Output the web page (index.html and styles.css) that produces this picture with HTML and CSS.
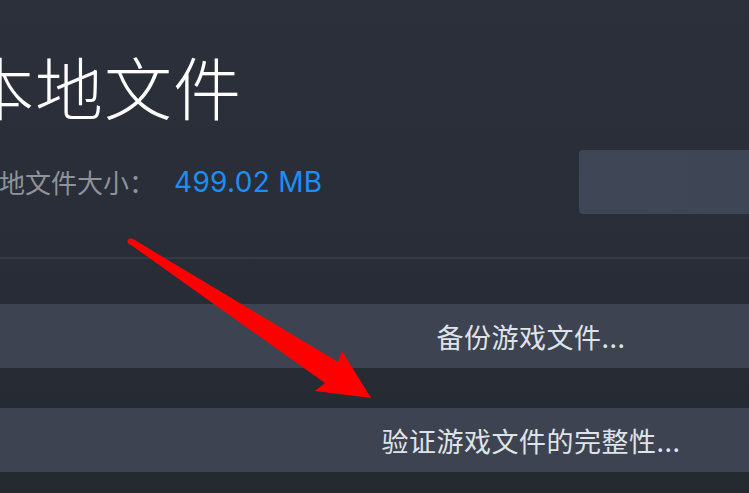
FILE: index.html
```html
<!DOCTYPE html>
<html lang="zh-CN">
<head>
    <meta charset="UTF-8">
    <meta name="viewport" content="width=device-width, initial-scale=1.0">
    <title>本地文件</title>
    <link rel="stylesheet" href="styles.css">
</head>
<body>
    <div class="page">
        <div class="content">
            <h1 class="title">本地文件</h1>
            <div class="sizeRow">
                <span class="sizeLabel">本地文件大小：</span>
                <span class="sizeValue">499.02 MB</span>
                <div class="browseBtn"></div>
            </div>
            <div class="divider"></div>
            <div class="actions">
                <button class="actionBtn" type="button">备份游戏文件...</button>
                <button class="actionBtn" type="button">验证游戏文件的完整性...</button>
            </div>
        </div>
        <!-- red hint arrow drawn over the page -->
        <svg class="arrow" width="749" height="493" viewBox="0 0 749 493">
            <path d="M128 240 Q130 237 133 239 L338 362 L342 351 L371 398 L315 391 L325 383 L131 245 Q126 243 128 240 Z" fill="#ff0000"/>
        </svg>
    </div>
</body>
</html>
```

FILE: styles.css
```css
html, body {
    margin: 0;
    padding: 0;
    height: 100%;
    overflow: hidden;
}
body {
    background: linear-gradient(180deg, #2c303b 0%, #292d37 50%, #252930 100%);
    font-family: "Noto Sans CJK SC", "Noto Sans", sans-serif;
}
.page {
    position: relative;
    width: 749px;
    height: 493px;
    overflow: hidden;
}
.content {
    margin-left: -30px;
    width: 1122px;
    padding-top: 52px;
}
.title {
    margin: 0 0 0 -4px;
    font-size: 68px;
    line-height: 68px;
    font-weight: 300;
    letter-spacing: 1px;
    color: #ffffff;
}
.sizeRow {
    display: flex;
    align-items: center;
    margin-top: 30px;
    height: 64px;
}
.sizeLabel {
    font-size: 26px;
    line-height: 26px;
    color: #8d939b;
    margin-left: 3px;
}
.sizeValue {
    margin-left: 19px;
    font-family: Inter, "Noto Sans", sans-serif;
    font-size: 28px;
    color: #1d8ef5;
    letter-spacing: 0.3px;
}
.browseBtn {
    margin-left: auto;
    width: 513px;
    height: 64px;
    border-radius: 4px;
    background: linear-gradient(90deg, #3f4655 0%, #3e4453 100%);
}
.divider {
    margin-top: 43px;
    height: 2px;
    background-color: #363a45;
}
.actions {
    display: flex;
    flex-direction: column;
    gap: 40px;
    margin-top: 45px;
}
.actionBtn {
    height: 64px;
    width: 100%;
    border: none;
    padding: 0;
    background-color: #3d4351;
    color: #dfe3e8;
    font-family: "Noto Sans CJK SC", "Noto Sans", sans-serif;
    font-size: 27px;
    letter-spacing: 0.5px;
    text-align: center;
}
.arrow {
    position: absolute;
    left: 0;
    top: 0;
}
```
